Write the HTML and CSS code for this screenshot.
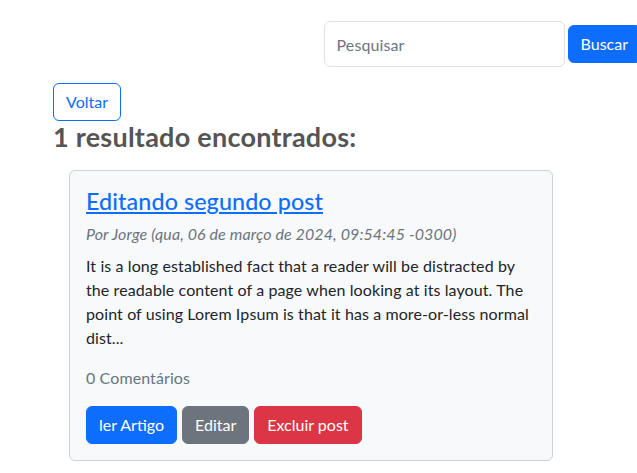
FILE: index.html
```html
<!DOCTYPE html>
<html lang="pt-BR">
<head>
<meta charset="utf-8">
<title>Busca</title>
<link rel="stylesheet" href="styles.css">
</head>
<body>
<header class="topbar">
  <form class="search">
    <input class="search-input" type="search" placeholder="Pesquisar">
    <button class="btn btn-primary search-btn" type="button">Buscar</button>
  </form>
</header>
<main class="main">
  <a class="btn btn-outline" href="#">Voltar</a>
  <h2 class="results-title">1 resultado encontrados:</h2>
  <article class="card">
    <h4 class="post-title"><a href="#">Editando segundo post</a></h4>
    <p class="post-meta">Por Jorge (qua, 06 de março de 2024, 09:54:45 -0300)</p>
    <p class="post-excerpt">It is a long established fact that a reader will be distracted by the readable content of a page when looking at its layout. The point of using Lorem Ipsum is that it has a more-or-less normal dist...</p>
    <p class="post-comments">0 Comentários</p>
    <div class="actions">
      <a class="btn btn-primary" href="#">ler Artigo</a>
      <a class="btn btn-secondary" href="#">Editar</a>
      <a class="btn btn-danger" href="#">Excluir post</a>
    </div>
  </article>
</main>
</body>
</html>
```
FILE: styles.css
```css
html, body {
  margin: 0;
  padding: 0;
  overflow: hidden;
}
body {
  font-family: Lato, "Liberation Sans", sans-serif;
  font-size: 16px;
  line-height: 1.5;
  letter-spacing: 0.1px;
  color: #212529;
  background: #fff;
}
.topbar {
  display: flex;
  justify-content: flex-end;
  padding-top: 21px;
  margin-right: -4px;
}
.search {
  display: flex;
  align-items: center;
  gap: 3px;
}
.search-input {
  box-sizing: border-box;
  width: 241px;
  height: 46px;
  padding: 6px 12px;
  font: inherit;
  letter-spacing: 0.1px;
  color: #212529;
  border: 1px solid #dee2e6;
  border-radius: 6px;
  outline: none;
}
.search-input::placeholder {
  color: #6c757d;
}
.btn {
  box-sizing: border-box;
  display: inline-flex;
  align-items: center;
  justify-content: center;
  height: 38px;
  padding: 0 12px;
  font: inherit;
  font-size: 16px;
  letter-spacing: 0;
  border: 1px solid transparent;
  border-radius: 6px;
  text-decoration: none;
  cursor: pointer;
}
.btn-primary {
  background: #0d6efd;
  border-color: #0d6efd;
  color: #fff;
}
.btn-secondary {
  background: #6c757d;
  border-color: #6c757d;
  color: #fff;
}
.btn-danger {
  background: #dc3545;
  border-color: #dc3545;
  color: #fff;
}
.btn-outline {
  color: #0d6efd;
  border-color: #0d6efd;
  background: #fff;
}
.main {
  padding: 16px 0 0 53px;
}
.results-title {
  margin: 0 0 17px;
  font-size: 27px;
  font-weight: 700;
  line-height: 1.2;
  letter-spacing: 0.25px;
  color: #555;
}
.card {
  box-sizing: border-box;
  width: 484px;
  margin-left: 16px;
  padding: 17px 16px 16px;
  background: #f8f9fa;
  border: 1px solid #cfd1d4;
  border-radius: 6px;
}
.post-title {
  margin: 0 0 6px;
  font-size: 23.3px;
  font-weight: 500;
  line-height: 1.2;
}
.post-title a {
  color: #0d6efd;
  text-decoration: underline;
}
.post-meta {
  margin: 0 0 8px;
  font-style: italic;
  color: #6c757d;
}
.post-excerpt {
  margin: 0 0 16px;
}
.post-comments {
  margin: 0 0 16px;
  color: #6c757d;
}
.actions {
  display: flex;
  gap: 5px;
}
```
